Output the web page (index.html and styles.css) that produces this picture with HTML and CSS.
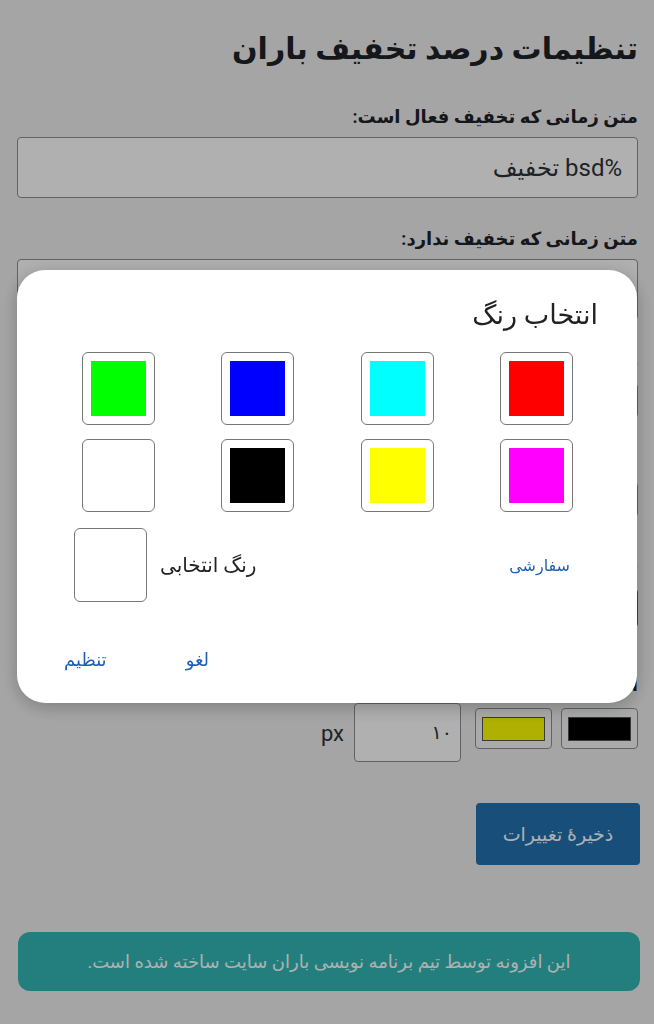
FILE: index.html
```html
<!DOCTYPE html>
<html lang="fa" dir="rtl">
<head>
<meta charset="utf-8">
<title>تنظیمات درصد تخفیف باران</title>
<link rel="stylesheet" href="styles.css">
</head>
<body>
<div class="wrap">
  <h1 class="title">تنظیمات درصد تخفیف باران</h1>

  <div class="field f1">
    <div class="label">متن زمانی که تخفیف فعال است:</div>
    <div class="input big">%bsd تخفیف</div>
  </div>

  <div class="field f2">
    <div class="label">متن زمانی که تخفیف ندارد:</div>
    <div class="input big"></div>
  </div>

  <div class="field f3">
    <div class="label">رنگ متن:</div>
    <div class="input mid"></div>
  </div>

  <div class="field f4">
    <div class="label">رنگ پس زمینه:</div>
    <div class="input mid"></div>
  </div>

  <div class="field f5">
    <div class="label">رنگ:</div>
    <div class="blue-strip"></div>
  </div>

  <div class="field f6">
    <div class="label">اندازه:</div>
    <div class="row">
      <div class="swatch-btn"><span class="fill fill-black"></span></div>
      <div class="swatch-btn"><span class="fill fill-yellow"></span></div>
      <div class="input num">۱۰</div>
      <span class="unit">px</span>
    </div>
  </div>

  <div class="save-row">
    <button class="save">ذخیرهٔ تغییرات</button>
  </div>

  <div class="footer">این افزونه توسط تیم برنامه نویسی باران سایت ساخته شده است.</div>
</div>

<div class="overlay"></div>

<div class="modal">
  <div class="modal-title">انتخاب رنگ</div>
  <div class="grid">
    <div class="sw"><span class="c red"></span></div>
    <div class="sw"><span class="c cyan"></span></div>
    <div class="sw"><span class="c blue"></span></div>
    <div class="sw"><span class="c green"></span></div>
    <div class="sw"><span class="c magenta"></span></div>
    <div class="sw"><span class="c yellow"></span></div>
    <div class="sw"><span class="c black"></span></div>
    <div class="sw"><span class="c white"></span></div>
  </div>
  <div class="picked">
    <span class="link custom">سفارشی</span>
    <div class="picked-group">
      <span class="picked-label">رنگ انتخابی</span>
      <span class="picked-box"></span>
    </div>
  </div>
  <div class="actions">
    <span class="link">لغو</span>
    <span class="link">تنظیم</span>
  </div>
</div>
</body>
</html>
```

FILE: styles.css
```css
* { box-sizing: border-box; }
html, body {
  margin: 0;
  padding: 0;
}
body {
  background: #f0f0f1;
  font-family: Roboto, "DejaVu Sans", sans-serif;
  color: #1d2327;
  width: 654px;
  height: 1024px;
  overflow: hidden;
}
.wrap {
  padding: 0 16px 0 17px;
}
.title {
  margin: 0;
  padding-top: 29px;
  height: 99px;
  font-size: 30px;
  line-height: 40px;
  font-weight: bold;
  color: #1d2327;
}
.field {
  display: flex;
  flex-direction: column;
}
.label {
  font-size: 18px;
  font-weight: bold;
  line-height: 36px;
  height: 36px;
  margin-bottom: 2px;
  white-space: nowrap;
}
.input {
  background: #fff;
  border: 1px solid #8c8f94;
  border-radius: 4px;
  color: #2c3338;
  display: flex;
  align-items: center;
}
.input.big {
  height: 61px;
  font-size: 24px;
  padding: 0 15px;
}
.f2 { margin-top: 23px; }
.f3 { margin-top: 22px; }
.f4 { margin-top: 22px; }
.f5 { margin-top: 27px; }
.f6 { margin-top: 40px; }
.input.mid {
  height: 35px;
  width: 200px;
  margin-top: 3px;
}
.f4 .input.mid { margin-top: 4px; }
.blue-strip {
  height: 38px;
  width: 150px;
  background: #2271b1;
  border-radius: 4px;
  margin-left: -2px;
  margin-top: 7px;
  align-self: flex-start;
}
.f6 .label {
  margin-bottom: 0;
}
.row {
  display: flex;
  align-items: flex-start;
  gap: 9px;
}
.swatch-btn {
  width: 77px;
  height: 41px;
  margin-top: 5px;
  border: 1px solid #8c8f94;
  border-radius: 4px;
  background: #f6f7f7;
  display: flex;
  align-items: center;
  justify-content: center;
}
.fill {
  width: 63px;
  height: 24px;
  border: 1px solid #555;
}
.fill-black { background: #000; }
.fill-yellow { background: #ffff00; }
.input.num {
  width: 107px;
  height: 59px;
  padding: 0 8px;
  font-size: 19px;
  margin-right: 5px;
}
.unit {
  font-size: 22px;
  line-height: 62px;
  color: #2c3338;
  margin-right: 1px;
}
.save-row {
  margin-top: 38px;
  margin-right: -2px;
}
.save {
  width: 164px;
  height: 62px;
  background: #2271b1;
  border: none;
  border-radius: 4px;
  color: #fff;
  font-family: Roboto, "DejaVu Sans", sans-serif;
  font-size: 19px;
}
.footer {
  margin-top: 67px;
  margin-left: 1px;
  margin-right: -2px;
  height: 59px;
  border-radius: 12px;
  background: #33b8b5;
  color: #fff;
  font-size: 18px;
  display: flex;
  align-items: center;
  justify-content: center;
}
.overlay {
  position: fixed;
  inset: 0;
  background: rgba(0, 0, 0, 0.31);
}
.modal {
  position: fixed;
  left: 17px;
  top: 270px;
  width: 620px;
  height: 433px;
  background: #fff;
  border-radius: 28px;
  box-shadow: 0 4px 18px rgba(0, 0, 0, 0.25);
  padding: 27px 31px 0 32px;
  color: #222;
}
.modal-title {
  font-size: 27px;
  line-height: 36px;
  padding-right: 8px;
}
.grid {
  margin-top: 19px;
  display: grid;
  grid-template-columns: repeat(4, 1fr);
  row-gap: 14px;
  justify-items: center;
}
.sw {
  width: 73px;
  height: 73px;
  border: 1px solid #777;
  border-radius: 6px;
  padding: 8px;
  background: #fff;
}
.c {
  display: block;
  width: 100%;
  height: 100%;
}
.red { background: #ff0000; }
.cyan { background: #00ffff; }
.blue { background: #0000ff; }
.green { background: #00ff00; }
.magenta { background: #ff00ff; }
.yellow { background: #ffff00; }
.black { background: #000; }
.white { background: #fff; }
.picked {
  margin-top: 16px;
  display: flex;
  align-items: center;
  justify-content: space-between;
  height: 74px;
}
.link {
  color: #1e5fb4;
  font-size: 17px;
}
.custom { margin-right: 36px; font-size: 16px; }
.picked-group {
  display: flex;
  align-items: center;
  gap: 13px;
  margin-left: 25px;
}
.picked-label {
  font-size: 20px;
  color: #222;
}
.picked-box {
  width: 73px;
  height: 74px;
  border: 1px solid #777;
  border-radius: 6px;
}
.actions {
  margin-top: 37px;
  height: 40px;
  display: flex;
  align-items: center;
  justify-content: flex-end;
  gap: 79px;
  padding-left: 15px;
}
.actions .link { font-size: 18px; }
```
